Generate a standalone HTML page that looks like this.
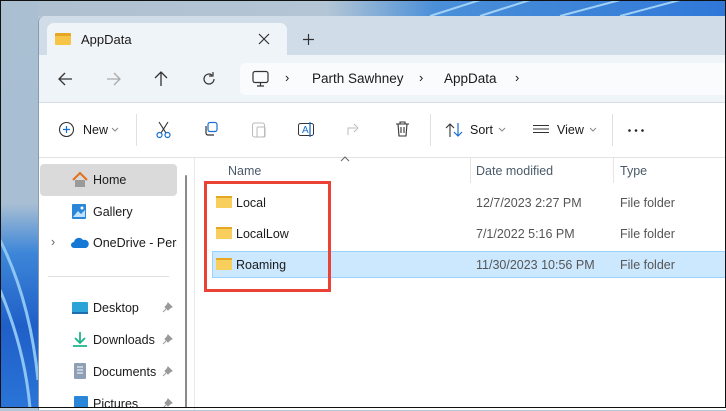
<!DOCTYPE html><html><head><style>
*{margin:0;padding:0;box-sizing:border-box}
body{width:726px;height:408px;overflow:hidden;position:relative;background:#b3c7d9;font-family:"Liberation Sans",sans-serif;font-size:12.5px;color:#1a1a1a}
.a{position:absolute}
.t{position:absolute;white-space:nowrap}
svg{position:absolute;overflow:visible}
</style></head><body>
<div class="a" style="left:0;top:0;width:726px;height:16px;background:linear-gradient(90deg,#aebfcf 0%,#b4c6d6 45%,#4a8fd8 60%,#2f78d8 100%)"></div>
<svg style="left:420px;top:0" width="306" height="16"><path d="M10 16 L60 0 M60 16 L110 0 M140 16 L200 0 M200 16 L260 0" stroke="#9fd0f5" stroke-width="2"/></svg>
<div class="a" style="left:0;top:0;width:38px;height:408px;background:linear-gradient(180deg,#aabfd2 0%,#a7bed3 50%,#3d86d8 62%,#1f5fc8 80%,#2a74d8 100%)"></div>
<svg style="left:0;top:180px" width="38" height="228"><path d="M0 60 Q30 120 38 200 M0 110 Q25 170 30 228" stroke="#8cc4f2" stroke-width="3" fill="none"/></svg>
<div class="a" style="left:38px;top:16px;width:690px;height:394px;background:#fff;border-radius:7px 0 0 0;border-left:1px solid #8a9aa8;overflow:hidden">
 <div class="a" style="left:0;top:0;width:690px;height:39px;background:#d0dde9"></div>
 <div class="a" style="left:8px;top:7px;width:240px;height:33px;background:#eff4f9;border-radius:7px 7px 0 0"></div>
 <div class="a" style="left:0;top:39px;width:690px;height:48px;background:#eff4f9;border-bottom:1px solid #d6dde4"></div>
 <div class="a" style="left:201px;top:47px;width:490px;height:32px;background:#fafbfd;border-radius:5px"></div>
 <div class="a" style="left:0;top:141px;width:690px;height:1px;background:#e3e3e3"></div>
 <div class="a" style="left:155px;top:142px;width:1px;height:260px;background:#e8e8e8"></div>
</div>
<div class="a" style="left:55px;top:33px;width:16px;height:12px;background:#f6c548;border-radius:1px;border-top:3px solid #e6a823"></div>
<div class="t" style="left:81px;top:32px;font-size:13px">AppData</div>
<svg style="left:259px;top:34px" width="10" height="10"><path d="M0 0L10 10M10 0L0 10" stroke="#333" stroke-width="1.2"/></svg>
<svg style="left:303px;top:34px" width="11" height="11"><path d="M5.5 0V11M0 5.5H11" stroke="#333" stroke-width="1.2"/></svg>
<svg style="left:58px;top:72px" width="14" height="14"><path d="M14 7H1M7 1L1 7L7 13" stroke="#333" stroke-width="1.3" fill="none"/></svg>
<svg style="left:107px;top:72px" width="14" height="14"><path d="M0 7H13M7 1L13 7L7 13" stroke="#aaa" stroke-width="1.3" fill="none"/></svg>
<svg style="left:154px;top:71px" width="14" height="15"><path d="M7 15V1M1 7L7 1L13 7" stroke="#333" stroke-width="1.3" fill="none"/></svg>
<svg style="left:202px;top:72px" width="14" height="14"><path d="M12 7A5 5 0 1 1 10 3M11 0V4H7" stroke="#333" stroke-width="1.2" fill="none"/></svg>
<svg style="left:252px;top:71px" width="17" height="16"><rect x="1" y="0.5" width="15" height="11" rx="2" stroke="#333" stroke-width="1.2" fill="none"/><path d="M5 15H12M8.5 12V15" stroke="#333" stroke-width="1.2"/></svg>
<div class="t" style="left:285px;top:70px;font-size:13px">›</div>
<div class="t" style="left:312px;top:71px;font-size:13.5px">Parth Sawhney</div>
<div class="t" style="left:419px;top:70px;font-size:13px">›</div>
<div class="t" style="left:444px;top:71px;font-size:13.5px">AppData</div>
<div class="t" style="left:515px;top:70px;font-size:13px">›</div>
<svg style="left:59px;top:122px" width="15" height="15"><circle cx="7.5" cy="7.5" r="7" stroke="#333" stroke-width="1.1" fill="none"/><path d="M7.5 4V11M4 7.5H11" stroke="#1a6fd1" stroke-width="1.2"/></svg>
<div class="t" style="left:83px;top:123px;font-size:12.5px">New</div>
<svg style="left:112px;top:128px" width="6" height="4"><path d="M0 0L3 3L6 0" stroke="#888" fill="none"/></svg>
<div class="a" style="left:136px;top:114px;width:1px;height:32px;background:#e0e0e0"></div>
<svg style="left:156px;top:122px" width="15" height="16"><path d="M3 0L10 11M12 0L5 11" stroke="#333" stroke-width="1.1"/><circle cx="3.5" cy="13" r="2.5" stroke="#1a6fd1" fill="none" stroke-width="1.2"/><circle cx="11.5" cy="13" r="2.5" stroke="#1a6fd1" fill="none" stroke-width="1.2"/></svg>
<svg style="left:204px;top:122px" width="14" height="14"><rect x="4" y="0.5" width="9" height="9" rx="2" stroke="#1a6fd1" fill="none" stroke-width="1.2"/><path d="M2 4V11A2 2 0 0 0 4 13H10" stroke="#333" fill="none" stroke-width="1.2"/></svg>
<svg style="left:252px;top:121px" width="14" height="17"><rect x="0.5" y="2" width="12" height="14" rx="2" stroke="#bbb" fill="none"/><rect x="5" y="6" width="8" height="10" rx="1" stroke="#bbb" fill="none"/></svg>
<svg style="left:298px;top:122px" width="18" height="16"><rect x="0.5" y="1.5" width="15" height="12" rx="2" stroke="#333" fill="none"/><text x="4" y="11" font-size="10" fill="#1a6fd1" font-family="Liberation Sans">A</text><path d="M12 0V15" stroke="#1a6fd1" stroke-width="1.3"/></svg>
<svg style="left:347px;top:123px" width="15" height="13"><path d="M1 12V5H9M7 1L11 5L7 9" stroke="#bbb" fill="none"/></svg>
<svg style="left:396px;top:122px" width="13" height="15"><path d="M0 2H13M4 2V0H9V2M2 2L3 14H10L11 2M5 5V11M8 5V11" stroke="#333" fill="none" stroke-width="1.1"/></svg>
<div class="a" style="left:430px;top:114px;width:1px;height:32px;background:#e0e0e0"></div>
<svg style="left:446px;top:123px" width="17" height="14"><path d="M4 14V1M0 5L4 1L8 5" stroke="#333" fill="none" stroke-width="1.1"/><path d="M12 0V13M8 9L12 13L16 9" stroke="#1a6fd1" fill="none" stroke-width="1.2"/></svg>
<div class="t" style="left:470px;top:123px">Sort</div>
<svg style="left:499px;top:128px" width="6" height="4"><path d="M0 0L3 3L6 0" stroke="#888" fill="none"/></svg>
<svg style="left:533px;top:125px" width="16" height="10"><path d="M0 0.5H16M0 4H16M0 7.5H16" stroke="#333" stroke-width="1"/></svg>
<div class="t" style="left:557px;top:123px">View</div>
<svg style="left:590px;top:128px" width="6" height="4"><path d="M0 0L3 3L6 0" stroke="#888" fill="none"/></svg>
<div class="a" style="left:612px;top:114px;width:1px;height:32px;background:#e0e0e0"></div>
<svg style="left:628px;top:129px" width="18" height="3"><circle cx="1.5" cy="1.5" r="1.3" fill="#222"/><circle cx="8" cy="1.5" r="1.3" fill="#222"/><circle cx="14.5" cy="1.5" r="1.3" fill="#222"/></svg>
<div class="a" style="left:40px;top:164px;width:137px;height:32px;background:#dadada;border-radius:4px"></div>
<div class="a" style="left:185px;top:175px;width:2px;height:233px;background:#8a8a8a;border-radius:1px"></div>
<svg style="left:72px;top:172px" width="16" height="15"><path d="M1 8L8 1L15 8" stroke="#e0701c" stroke-width="2" fill="none"/><path d="M3 8V15H13V8" fill="#9a9a9a"/></svg>
<div class="t" style="left:93px;top:173px">Home</div>
<svg style="left:72px;top:204px" width="14" height="15"><rect width="14" height="15" rx="1" fill="#2a86d8"/><path d="M1 13L6 7L9 10L13 6V13Z" fill="#bfe3ff"/><circle cx="10" cy="4" r="1.5" fill="#fff"/></svg>
<div class="t" style="left:93px;top:205px">Gallery</div>
<div class="t" style="left:51px;top:235px;color:#666">›</div>
<svg style="left:71px;top:237px" width="18" height="11"><path d="M3 11A3 3 0 0 1 3 5A5 5 0 0 1 12 3A4 4 0 0 1 15 11Z" fill="#1578d4"/></svg>
<div class="t" style="left:93px;top:236px;width:84px;overflow:hidden">OneDrive - Personal</div>
<div class="a" style="left:48px;top:276px;width:121px;height:1px;background:#e0e0e0"></div>
<svg style="left:72px;top:302px" width="16" height="12"><rect width="16" height="12" rx="1" fill="#2aa4d8"/><rect x="0" y="10" width="16" height="2" fill="#1b6fb0"/></svg>
<div class="t" style="left:93px;top:301px">Desktop</div>
<svg style="left:73px;top:332px" width="14" height="15"><path d="M7 0V11M2 6L7 11L12 6M0 14H14" stroke="#1db58a" stroke-width="1.8" fill="none"/></svg>
<div class="t" style="left:93px;top:333px">Downloads</div>
<svg style="left:74px;top:363px" width="12" height="16"><rect width="12" height="16" rx="1" fill="#8f9fb5"/><path d="M3 4H9M3 7H9M3 10H9" stroke="#fff"/></svg>
<div class="t" style="left:93px;top:365px">Documents</div>
<svg style="left:74px;top:396px" width="14" height="12"><rect width="14" height="12" rx="1" fill="#2a86d8"/></svg>
<div class="t" style="left:93px;top:397px">Pictures</div>
<svg style="left:163px;top:302px" width="10" height="10"><path d="M5 1L9 5L7 6L5 8L2 5L4 3Z M3 7L0 10" fill="#999" stroke="#999"/></svg>
<svg style="left:163px;top:334px" width="10" height="10"><path d="M5 1L9 5L7 6L5 8L2 5L4 3Z M3 7L0 10" fill="#999" stroke="#999"/></svg>
<svg style="left:163px;top:366px" width="10" height="10"><path d="M5 1L9 5L7 6L5 8L2 5L4 3Z M3 7L0 10" fill="#999" stroke="#999"/></svg>
<svg style="left:163px;top:398px" width="10" height="10"><path d="M5 1L9 5L7 6L5 8L2 5L4 3Z M3 7L0 10" fill="#999" stroke="#999"/></svg>
<svg style="left:341px;top:157px" width="8" height="4"><path d="M0 4L4 0L8 4" stroke="#666" fill="none"/></svg>
<div class="t" style="left:228px;top:164px;color:#4a5a6a">Name</div>
<div class="a" style="left:470px;top:157px;width:1px;height:26px;background:#e5e5e5"></div>
<div class="t" style="left:476px;top:164px;color:#4a5a6a">Date modified</div>
<div class="a" style="left:613px;top:157px;width:1px;height:26px;background:#e5e5e5"></div>
<div class="t" style="left:620px;top:164px;color:#4a5a6a">Type</div>
<div class="a" style="left:212px;top:251px;width:516px;height:27px;background:#cce8ff;border:1px solid #99d1ff"></div>
<div class="a" style="left:216px;top:196px;width:16px;height:12px;background:#f8cf5c;border-top:2px solid #e6a823"></div>
<div class="t" style="left:236px;top:196px">Local</div>
<div class="a" style="left:216px;top:227px;width:16px;height:12px;background:#f8cf5c;border-top:2px solid #e6a823"></div>
<div class="t" style="left:236px;top:227px">LocalLow</div>
<div class="a" style="left:216px;top:258px;width:16px;height:12px;background:#f8cf5c;border-top:2px solid #e6a823"></div>
<div class="t" style="left:236px;top:258px">Roaming</div>
<div class="t" style="left:476px;top:196px;color:#555">12/7/2023 2:27 PM</div>
<div class="t" style="left:476px;top:227px;color:#555">7/1/2022 5:16 PM</div>
<div class="t" style="left:476px;top:258px;color:#555">11/30/2023 10:56 PM</div>
<div class="t" style="left:620px;top:196px;color:#555">File folder</div>
<div class="t" style="left:620px;top:227px;color:#555">File folder</div>
<div class="t" style="left:620px;top:258px;color:#555">File folder</div>
<div class="a" style="left:204px;top:181px;width:127px;height:111px;border:3px solid #ea4335"></div>
<div class="a" style="left:0;top:0;width:726px;height:408px;border:1px solid #111"></div>
</body></html>
